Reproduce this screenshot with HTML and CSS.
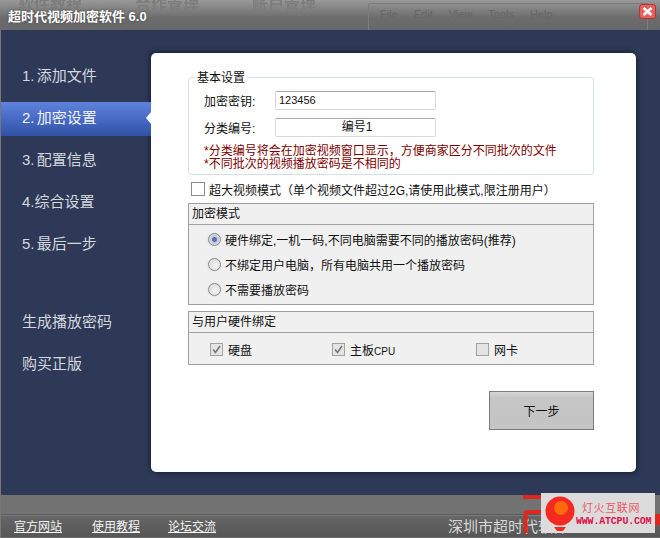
FILE: index.html
```html
<!DOCTYPE html>
<html lang="en">
<head>
    <meta charset="UTF-8">
    <meta name="viewport" content="width=device-width, initial-scale=1.0">
    <title>超时代视频加密软件</title>
    <link rel="stylesheet" href="styles.css">
</head>
<body>
    <div class="window">
        <div class="titlebar">
            <div class="ghost-tabs">
                <span>软件教程</span>
                <span>合作管理</span>
                <span>账户管理</span>
            </div>
            <h1 class="app-title">超时代视频加密软件 6.0</h1>
            <div class="ghost-menu">
                <span>File</span>
                <span>Edit</span>
                <span>View</span>
                <span>Tools</span>
                <span>Help</span>
            </div>
            <button class="close-btn" aria-label="关闭">
                <svg width="11" height="9" viewBox="0 0 11 9"><path d="M1.5 1 L9.5 8 M9.5 1 L1.5 8" stroke="#fff" stroke-width="2.6" fill="none"/></svg>
            </button>
        </div>

        <div class="main">
            <div class="sidebar">
                <div class="nav-item">1. 添加文件</div>
                <div class="nav-item active">2. 加密设置</div>
                <div class="nav-item">3. 配置信息</div>
                <div class="nav-item">4.综合设置</div>
                <div class="nav-item">5. 最后一步</div>
                <div class="nav-item nav-gap">生成播放密码</div>
                <div class="nav-item">购买正版</div>
            </div>

            <div class="panel">
                <div class="basic-box">
                    <div class="legend">基本设置</div>
                    <div class="field">
                        <label>加密密钥:</label>
                        <div class="input key">123456</div>
                    </div>
                    <div class="field">
                        <label>分类编号:</label>
                        <div class="input center">编号1</div>
                    </div>
                    <p class="note">*分类编号将会在加密视频窗口显示，方便商家区分不同批次的文件<br>*不同批次的视频播放密码是不相同的</p>
                </div>

                <div class="big-mode">
                    <span class="check large"></span>
                    <span>超大视频模式（单个视频文件超过2G,请使用此模式,限注册用户）</span>
                </div>

                <div class="group">
                    <div class="group-head">加密模式</div>
                    <div class="radio-list">
                        <div class="radio-row"><span class="radio on"></span>硬件绑定,一机一码,不同电脑需要不同的播放密码(推荐)</div>
                        <div class="radio-row"><span class="radio"></span>不绑定用户电脑，所有电脑共用一个播放密码</div>
                        <div class="radio-row"><span class="radio"></span>不需要播放密码</div>
                    </div>
                </div>

                <div class="group group-hw">
                    <div class="group-head">与用户硬件绑定</div>
                    <div class="check-list">
                        <div class="check-item c1">
                            <span class="check small">
                                <svg width="9" height="9" viewBox="0 0 9 9"><path d="M1 4.5 L3.5 7.5 L8 1" stroke="#777" stroke-width="1.6" fill="none"/></svg>
                            </span>硬盘
                        </div>
                        <div class="check-item c2">
                            <span class="check small">
                                <svg width="9" height="9" viewBox="0 0 9 9"><path d="M1 4.5 L3.5 7.5 L8 1" stroke="#777" stroke-width="1.6" fill="none"/></svg>
                            </span>
                            <span>主板<span class="latin">CPU</span></span>
                        </div>
                        <div class="check-item">
                            <span class="check small"></span>网卡
                        </div>
                    </div>
                </div>

                <div class="actions">
                    <button class="btn">下一步</button>
                </div>
            </div>
        </div>

        <div class="footer">
            <div class="footer-top"></div>
            <div class="footer-links">
                <a>官方网站</a>
                <a>使用教程</a>
                <a class="forum">论坛交流</a>
                <span class="company">深圳市超时代软件</span>
            </div>
        </div>

        <svg class="red-logo" width="40" height="43" viewBox="0 0 40 43">
            <path d="M0 2 H22 M2.5 38 V19 Q2.5 17 5 17 H22" stroke="#e0261f" stroke-width="4" fill="none"/>
        </svg>
        <div class="red-edge"></div>

        <div class="watermark">
            <svg class="bulb" width="30" height="37" viewBox="0 0 30 37">
                <circle cx="15" cy="15" r="14.5" fill="#f5291f"/>
                <circle cx="16" cy="12" r="7" fill="#ff6a10"/>
                <path d="M9 31 H21 L18 35 H12 Z" fill="#f5291f"/>
            </svg>
            <div class="wm-text">
                <div class="wm-cn">灯火互联网</div>
                <div class="wm-en">WWW.ATCPU.COM</div>
            </div>
        </div>
    </div>
</body>
</html>
```

FILE: styles.css
```css
body {
    margin: 0;
    background-color: #2d3956;
    font-family: "Liberation Sans", "Noto Sans CJK SC", sans-serif;
    font-size: 12px;
    color: #111;
}

.window {
    position: relative;
    width: 660px;
    height: 538px;
    display: flex;
    flex-direction: column;
    overflow: hidden;
}

.titlebar {
    position: relative;
    height: 30px;
    flex-shrink: 0;
    display: flex;
    align-items: center;
    background: linear-gradient(#999999, #6c6c6c 60%, #686868);
    overflow: hidden;
}

.ghost-tabs {
    position: absolute;
    left: 18px;
    top: -9px;
    display: flex;
    gap: 53px;
    font-size: 16px;
    font-weight: bold;
    color: #7d7d7d;
    filter: blur(0.6px);
}

.app-title {
    position: relative;
    margin: 0 0 0 8px;
    font-size: 13px;
    font-weight: bold;
    color: #fff;
    text-shadow: 0 0 3px #444;
}

.ghost-menu {
    position: absolute;
    left: 368px;
    top: 3px;
    width: 280px;
    height: 27px;
    box-sizing: border-box;
    padding: 4px 0 0 11px;
    display: flex;
    gap: 16px;
    border: 1px solid #7c7c7c;
    border-bottom: none;
    border-radius: 3px 0 0 0;
    font-size: 11px;
    color: #666;
}

.close-btn {
    position: absolute;
    left: 639px;
    top: 4px;
    width: 17px;
    height: 15px;
    padding: 0;
    display: flex;
    align-items: center;
    justify-content: center;
    background-color: #e8605c;
    border: 1px solid #a83a38;
    border-radius: 3px;
}

.main {
    flex: 1;
    display: flex;
    border-left: 1px solid #777;
    background-color: #2d3956;
}

.sidebar {
    width: 150px;
    flex-shrink: 0;
    padding-top: 29px;
    box-sizing: border-box;
    color: #d3d7de;
    font-size: 15px;
    word-spacing: -2px;
}

.nav-item {
    height: 34px;
    margin-bottom: 8px;
    padding-left: 21px;
    line-height: 34px;
}

.nav-item.active {
    position: relative;
    margin-top: 9px;
    margin-bottom: 7px;
    line-height: 32px;
    color: #f0f3fa;
    background: linear-gradient(#5f82dc, #4a6cc6 45%, #2e52a4);
}

.nav-item.active::after {
    content: "";
    position: absolute;
    right: 0;
    top: 10px;
    border: 6px solid transparent;
    border-left: none;
    border-right-width: 5px;
    border-right-color: #fff;
}

.nav-gap {
    margin-top: 44px;
}

.panel {
    width: 485px;
    height: 419px;
    margin-top: 23px;
    padding: 24px 42px 0 37px;
    box-sizing: border-box;
    background-color: #fff;
    border-radius: 5px;
    box-shadow: -2px -2px 4px rgba(15, 20, 35, 0.45), 2px 2px 4px rgba(15, 20, 35, 0.45);
}

.basic-box {
    position: relative;
    height: 98px;
    box-sizing: border-box;
    padding: 13px 0 0 15px;
    border: 1px solid #d6dee6;
    border-radius: 4px;
}

.legend {
    position: absolute;
    left: 6px;
    top: -6px;
    padding: 0 2px;
    line-height: 13px;
    background-color: #fff;
}

.field {
    display: flex;
    align-items: center;
    height: 19px;
    margin-bottom: 8px;
}

.field label {
    width: 71px;
}

.input {
    width: 161px;
    height: 19px;
    box-sizing: border-box;
    padding-left: 3px;
    line-height: 17px;
    border: 1px solid #d8d8d8;
    border-top-color: #a8a8a8;
    border-radius: 2px;
}

.input.key {
    font-size: 11px;
}

.input.center {
    text-align: center;
}

.note {
    margin: 5px 0 0;
    line-height: 13px;
    color: #800000;
}

.big-mode {
    display: flex;
    align-items: center;
    gap: 4px;
    height: 14px;
    margin: 7px 0 0 3px;
}

.check {
    display: inline-flex;
    align-items: center;
    justify-content: center;
    flex-shrink: 0;
    box-sizing: border-box;
    border: 1px solid #8c8c8c;
    background-color: #fff;
}

.check.large {
    width: 14px;
    height: 14px;
}

.check.small {
    width: 13px;
    height: 13px;
    margin-right: 5px;
    border-color: #a2a2a2;
    background-color: #e4e4e4;
}

.latin {
    font-size: 10px;
}

.group {
    margin-top: 7px;
    height: 102px;
    box-sizing: border-box;
    border: 1px solid #a0a0a0;
    background-color: #f0f0f0;
}

.group-hw {
    margin-top: 6px;
    height: 54px;
}

.group-head {
    height: 21px;
    padding-left: 3px;
    line-height: 21px;
    box-sizing: border-box;
    border-bottom: 1px solid #a0a0a0;
}

.radio-list {
    padding: 2px 0 0 19px;
}

.radio-row {
    display: flex;
    align-items: center;
    height: 25px;
}

.radio {
    width: 13px;
    height: 13px;
    margin-right: 4px;
    box-sizing: border-box;
    border: 1px solid #8e8e8e;
    border-radius: 50%;
    background: radial-gradient(circle at 60% 60%, #f4f4f4, #d4d4d4);
    box-shadow: 0 0 1px #aaa;
}

.radio.on {
    background: radial-gradient(circle, #5470b0 0 2px, #c4cbd8 3px, #e4e6ea);
}

.check-list {
    display: flex;
    padding: 10px 0 0 21px;
}

.check-item {
    display: flex;
    align-items: center;
    flex-shrink: 0;
    height: 13px;
    width: 122px;
}

.check-item.c2 {
    width: 144px;
}

.actions {
    display: flex;
    justify-content: flex-end;
    margin-top: 26px;
}

.btn {
    width: 105px;
    height: 39px;
    padding: 0;
    font: inherit;
    color: #111;
    background: linear-gradient(#d6d6d6, #c6c6c6 15%, #c4c4c4);
    border: 1px solid #7c7c7c;
}

.footer {
    height: 43px;
    flex-shrink: 0;
    border-left: 1px solid #777;
    background-color: #707070;
}

.footer-top {
    height: 19px;
    background-color: #727272;
    border-bottom: 1px solid #5a5a5a;
}

.footer-links {
    height: 19px;
    padding-bottom: 2px;
    display: flex;
    align-items: center;
    padding-left: 13px;
    background: linear-gradient(#666666, #565656);
    border-top: 1px solid #7a7a7a;
    color: #f4f4f4;
}

.footer-links a {
    margin-right: 30px;
    text-decoration: underline;
}

.footer-links a.forum {
    margin-left: -2px;
}

.company {
    margin-left: 202px;
    font-size: 15px;
    white-space: nowrap;
    color: #d8d8d8;
}

.red-logo {
    position: absolute;
    left: 523px;
    top: 495px;
}

.red-edge {
    position: absolute;
    left: 655px;
    top: 514px;
    width: 5px;
    height: 11px;
    background-color: #e0261f;
}

.watermark {
    position: absolute;
    left: 541px;
    top: 493px;
    width: 114px;
    height: 40px;
    display: flex;
    background-color: #dcdcdc;
}

.bulb {
    margin: 3px 0 0 4px;
    flex-shrink: 0;
}

.wm-text {
    padding: 9px 0 0 1px;
}

.wm-cn {
    margin-left: 6px;
    font-size: 11px;
    line-height: 13px;
    letter-spacing: 0.6px;
    color: #ea5a64;
}

.wm-en {
    font-family: "Liberation Mono", monospace;
    font-size: 10px;
    font-weight: bold;
    line-height: 13px;
    letter-spacing: -0.2px;
    color: #e0104c;
}
```
